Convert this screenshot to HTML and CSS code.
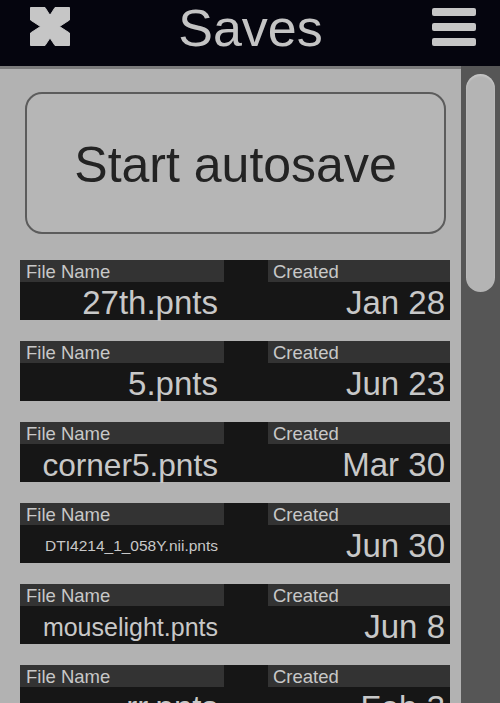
FILE: index.html
```html
<!DOCTYPE html>
<html lang="en">
<head>
<meta charset="utf-8">
<title>Saves</title>
<link rel="stylesheet" href="styles.css">
</head>
<body>
<header class="header">
  <button class="icon-btn close" aria-label="Close">
    <svg width="40" height="39" viewBox="0 0 40 39"><polygon points="0.5,0.5 15,0.5 20,8.3 25,0.5 39.5,0.5 39.5,13 29.5,19.5 39.5,26 39.5,38.5 25,38.5 20,31 15,38.5 0.5,38.5 0.5,26 10.5,19.5 0.5,13" fill="#c6c6c6" stroke="#c6c6c6" stroke-width="1" stroke-linejoin="round"/></svg>
  </button>
  <h1 class="title">Saves</h1>
  <button class="icon-btn menu" aria-label="Menu">
    <span class="bar"></span><span class="bar"></span><span class="bar"></span>
  </button>
</header>
<div class="main">
  <div class="content">
    <button class="autosave">Start autosave</button>
    <ul class="saves">
      <li class="save">
        <span class="label name-label">File Name</span>
        <span class="label date-label">Created</span>
        <span class="value name">27th.pnts</span>
        <span class="value date">Jan 28</span>
      </li>
      <li class="save">
        <span class="label name-label">File Name</span>
        <span class="label date-label">Created</span>
        <span class="value name">5.pnts</span>
        <span class="value date">Jun 23</span>
      </li>
      <li class="save">
        <span class="label name-label">File Name</span>
        <span class="label date-label">Created</span>
        <span class="value name" style="font-size:31.6px">corner5.pnts</span>
        <span class="value date">Mar 30</span>
      </li>
      <li class="save">
        <span class="label name-label">File Name</span>
        <span class="label date-label">Created</span>
        <span class="value name" style="font-size:15.5px">DTI4214_1_058Y.nii.pnts</span>
        <span class="value date">Jun 30</span>
      </li>
      <li class="save">
        <span class="label name-label">File Name</span>
        <span class="label date-label">Created</span>
        <span class="value name" style="font-size:25px">mouselight.pnts</span>
        <span class="value date">Jun 8</span>
      </li>
      <li class="save">
        <span class="label name-label">File Name</span>
        <span class="label date-label">Created</span>
        <span class="value name">rr.pnts</span>
        <span class="value date">Feb 3</span>
      </li>
    </ul>
  </div>
  <div class="scrolltrack">
    <div class="thumb"></div>
  </div>
</div>
</body>
</html>
```

FILE: styles.css
```css
* { box-sizing: border-box; }

html, body {
  margin: 0;
  padding: 0;
}

body {
  width: 500px;
  height: 703px;
  overflow: hidden;
  background: #b2b2b2;
  font-family: "Liberation Sans", Arial, sans-serif;
}

.header {
  height: 66px;
  background: #05050e;
  display: flex;
  justify-content: space-between;
  align-items: flex-start;
  padding: 7px 24px 0 30px;
}

.icon-btn {
  border: 0;
  padding: 0;
  margin: 0;
  background: none;
  display: block;
}

.close svg { display: block; }

.title {
  margin: -7px 0 0 -1px;
  font-weight: normal;
  font-size: 52px;
  line-height: 56px;
  color: #c4c4c4;
}

.menu {
  width: 44px;
  display: flex;
  flex-direction: column;
  gap: 7px;
  padding-top: 1px;
}

.menu .bar {
  display: block;
  height: 8px;
  border-radius: 2px;
  background: #c6c6c6;
}

.main {
  display: flex;
  height: 637px;
}

.content {
  flex: 1;
  border-top: 3px solid #7c7c7c;
  padding: 23px 0 0 20px;
  overflow: hidden;
}

.autosave {
  display: block;
  width: 421px;
  height: 142px;
  margin: 0 0 26px 5px;
  border: 2px solid #5c5c5c;
  border-radius: 17px;
  background: #b6b6b6;
  color: #232323;
  font-family: "Liberation Sans", Arial, sans-serif;
  font-size: 50px;
  padding: 3px 0 0 0;
}

.saves {
  list-style: none;
  margin: 0;
  padding: 0;
  display: flex;
  flex-direction: column;
  gap: 21px;
}

.save {
  width: 430px;
  height: 60px;
  background: #161616;
  display: grid;
  grid-template-columns: 204px 44px 182px;
  grid-template-rows: 22px 38px;
}

.label {
  background: #333333;
  color: #c8c8c8;
  font-size: 18.5px;
  line-height: 20px;
  padding-top: 2px;
  white-space: nowrap;
}

.name-label { grid-column: 1; grid-row: 1; padding-left: 6px; }
.date-label { grid-column: 3; grid-row: 1; padding-left: 5px; }

.value {
  grid-row: 2;
  color: #c8c8c8;
  font-size: 33px;
  line-height: 38px;
  padding-top: 2px;
  text-align: right;
  white-space: nowrap;
}

.name { grid-column: 1; padding-right: 6px; }
.date { grid-column: 3; padding-right: 5px; }

.scrolltrack {
  width: 39px;
  background: #565656;
  padding: 8px 0 0 5px;
}

.thumb {
  width: 29px;
  height: 218px;
  border-radius: 15px;
  background: #b4b4b4;
  box-shadow: inset 0 2px 2px rgba(255,255,255,0.25);
}
```
